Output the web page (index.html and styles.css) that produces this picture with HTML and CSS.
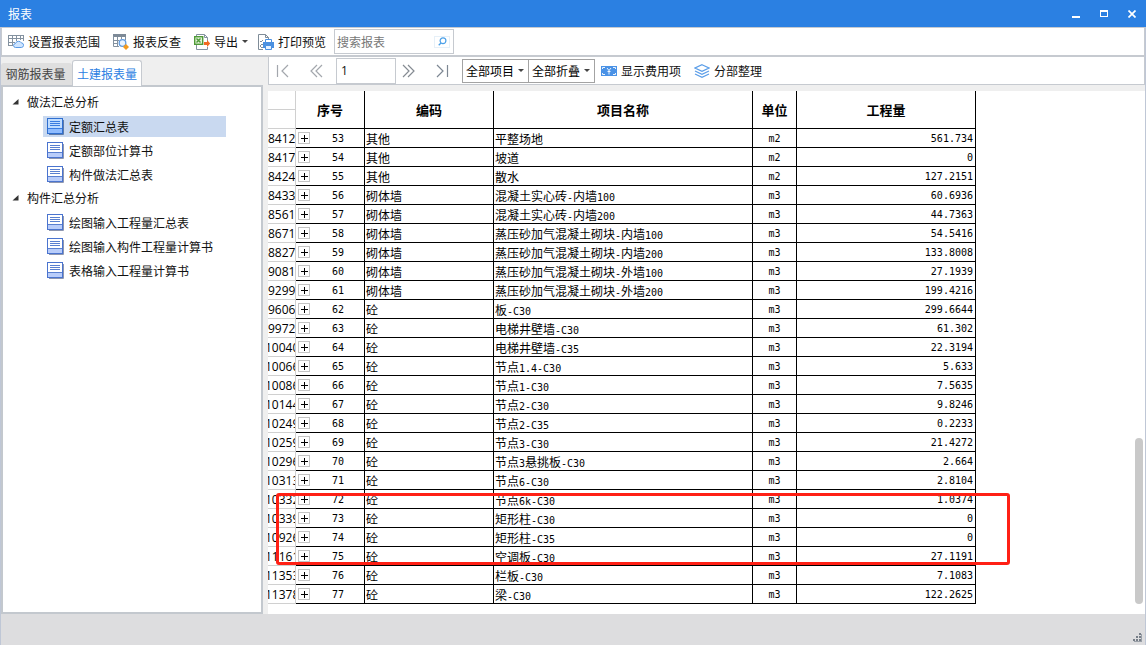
FILE: index.html
```
<!DOCTYPE html>
<html lang="zh-CN">
<head>
<meta charset="utf-8">
<title>报表</title>
<link rel="stylesheet" href="styles.css">
</head>
<body>
<svg class="defs" aria-hidden="true">
  <symbol id="sheet" viewBox="0 0 17 17">
    <path d="M2 16.5h14.5V2" fill="none" stroke="#8e97b0"/>
    <rect x=".5" y=".5" width="15" height="15" fill="#fff" stroke="#4a74cf"/>
    <path d="M1 11h14v4H1z" fill="#b9cdfa"/>
    <path d="M1 10.500h14M3 3.500h10M3 5.500h10M3 7.500h10" stroke="#5a80d0" fill="none"/>
  </symbol>
  <symbol id="sheet-on" viewBox="0 0 17 17">
    <path d="M2 16.5h14.5V2" fill="none" stroke="#5f7ba8"/>
    <rect x=".5" y=".5" width="15" height="15" fill="#bfdcff" stroke="#2f6fd0"/>
    <path d="M1 11h14v4H1z" fill="#8fbcff"/>
    <path d="M1 10.500h14M3 3.500h10M3 5.500h10M3 7.500h10" stroke="#3a7ce0" fill="none"/>
  </symbol>
</svg>
<div class="window">
  <header class="titlebar">
    <h1>报表</h1>
    <div class="win-buttons">
      <button type="button" aria-label="最小化"><svg width="8" height="8" viewBox="0 0 8 8"><path d="M0 6h8v2H0z" fill="#fff"/></svg></button>
      <button type="button" aria-label="最大化"><svg width="8" height="8" viewBox="0 0 8 8"><path d="M0 0h8v7H0zM1 2v4h6V2z" fill="#fff" fill-rule="evenodd"/></svg></button>
      <button type="button" aria-label="关闭"><svg width="8" height="8" viewBox="0 0 8 8"><path d="M.5.5l7 7M7.500.5l-7 7" stroke="#fff" stroke-width="1.700"/></svg></button>
    </div>
  </header>

  <div class="toolbar">
    <button class="tool" type="button">
      <svg width="16" height="16" viewBox="0 0 16 16"><path d="M.5 1v10.500M4.500 1v10.500M8.500 1v6M12.500 1v5M15.500 1v6M0 1.500h16M0 4.500h16M0 8.500h7M0 11.500h5" stroke="#8492a0" fill="none"/><path d="M7.500 13.500q-2-.2-2-2 .1-1.800 2-2 .6-2.300 3-2.200 2-.1 2.800 1.500 2.300.2 2.300 2.500-.2 2.100-2.300 2.200z" fill="#cfe5ff" stroke="#5b9be6"/></svg>
      设置报表范围</button>
    <button class="tool" type="button">
      <svg width="16" height="16" viewBox="0 0 16 16"><path d="M0 0h13v3H0z" fill="#7d8a97"/><path d="M.5 2v10.500H6M4.500 3v9M8.500 3v2M12.500 3v3M0 6.500h6M0 9.500h5" stroke="#8492a0" fill="none"/><circle cx="9.500" cy="9" r="3.300" fill="#eaf4ff" stroke="#5f9be0" stroke-width="1.300"/><path d="M13 10l3 3-3 3-3-3z" fill="#f39a1e"/></svg>
      报表反查</button>
    <button class="tool export" type="button">
      <svg width="16" height="16" viewBox="0 0 16 16"><path d="M2.500 2V.5h8l3 3V7M10.500.5v3h3M2.500 11v4.500h11V13" fill="#fff" stroke="#8492a0"/><rect x=".7" y="2.700" width="8" height="7.600" fill="#dff2d5" stroke="#4f9a38" stroke-width="1.400"/><path d="M2.500 4.500l4 4m0-4l-4 4" stroke="#4f9a38" stroke-width="1.400"/><path d="M10 8h3V6l3.200 3.500L13 13v-2h-3z" fill="#f26a22"/></svg>
      导出<i class="caret"></i></button>
    <button class="tool" type="button">
      <svg width="16" height="16" viewBox="0 0 16 16"><path d="M5 15.500H.5V.5h7l3 3V6M7.500.5v3h3" fill="none" stroke="#7f8c98"/><path d="M2 7h2v1H2zM4 6h1v1H4zM3 10h2v1H3zM2 11h1v2H2zM3 13h2v1H3z" fill="#7f8c98"/><path d="M7.500 9V5.500h6V9" fill="#fff" stroke="#4a90e0"/><path d="M5 8h11v6h-2v-2H7v2H5z" fill="#4a90e0"/><path d="M7.500 11.500h6v4h-6z" fill="#e3f0ff" stroke="#4a90e0"/></svg>
      打印预览</button>
    <div class="search">
      <input type="search" placeholder="搜索报表" aria-label="搜索报表">
      <button type="button" aria-label="搜索"><svg width="9" height="9" viewBox="0 0 9 9"><circle cx="5" cy="3.800" r="2.900" fill="none" stroke="#4ba0e8" stroke-width="1.200"/><path d="M3 6L.7 8.200" stroke="#4ba0e8" stroke-width="1.300"/></svg></button>
    </div>
  </div>

  <div class="main">
    <aside class="side">
      <div class="tabs" role="tablist">
        <button class="tab" type="button" role="tab" aria-selected="false">钢筋报表量</button>
        <button class="tab active" type="button" role="tab" aria-selected="true">土建报表量</button>
      </div>
      <nav class="tree">
        <p class="group"><svg width="7" height="6" viewBox="0 0 7 6"><path d="M6.500 0v5.500H.5z" fill="#333"/></svg>做法汇总分析</p>
        <a class="leaf selected" href="#"><svg width="17" height="17"><use href="#sheet-on"/></svg>定额汇总表</a>
        <a class="leaf" href="#"><svg width="17" height="17"><use href="#sheet"/></svg>定额部位计算书</a>
        <a class="leaf" href="#"><svg width="17" height="17"><use href="#sheet"/></svg>构件做法汇总表</a>
        <p class="group"><svg width="7" height="6" viewBox="0 0 7 6"><path d="M6.500 0v5.500H.5z" fill="#333"/></svg>构件汇总分析</p>
        <a class="leaf" href="#"><svg width="17" height="17"><use href="#sheet"/></svg>绘图输入工程量汇总表</a>
        <a class="leaf" href="#"><svg width="17" height="17"><use href="#sheet"/></svg>绘图输入构件工程量计算书</a>
        <a class="leaf" href="#"><svg width="17" height="17"><use href="#sheet"/></svg>表格输入工程量计算书</a>
      </nav>
    </aside>

    <section class="content">
      <div class="pager">
        <button class="page-btn" type="button" aria-label="首页"><svg width="14" height="14" viewBox="0 0 14 14"><path d="M1.500 1v12M12 1L6 7l6 6" fill="none" stroke="#a3a7ad" stroke-width="1.200"/></svg></button>
        <button class="page-btn" type="button" aria-label="上一页"><svg width="14" height="14" viewBox="0 0 14 14"><path d="M8 1L2 7l6 6M13 1L7 7l6 6" fill="none" stroke="#a3a7ad" stroke-width="1.200"/></svg></button>
        <input class="page-no" type="text" value="1" aria-label="页码">
        <button class="page-btn" type="button" aria-label="下一页"><svg width="14" height="14" viewBox="0 0 14 14"><path d="M1 1l6 6-6 6M6 1l6 6-6 6" fill="none" stroke="#858b92" stroke-width="1.200"/></svg></button>
        <button class="page-btn" type="button" aria-label="末页"><svg width="14" height="14" viewBox="0 0 14 14"><path d="M2 1l6 6-6 6M12.500 1v12" fill="none" stroke="#7d8793" stroke-width="1.200"/></svg></button>
        <label class="pick"><select aria-label="项目"><option>全部项目</option></select><i class="caret"></i></label>
        <label class="pick"><select aria-label="折叠"><option>全部折叠</option></select><i class="caret"></i></label>
        <button class="tool fee" type="button">
          <svg width="16" height="10" viewBox="0 0 16 10"><path d="M0 0h16v10H0z" fill="#4a92e6"/><path d="M1.500 3V1.500H4M12 1.500h2.500V3M14.500 7v1.500H12M4 8.500H1.500V7M6 2l2 2.500L10 2M8 4.500v4M6.500 5.500h3" fill="none" stroke="#fff" stroke-width=".9"/></svg>
          显示费用项</button>
        <button class="tool" type="button">
          <svg width="16" height="14" viewBox="0 0 16 14"><path d="M8 .7l7 3.300-7 3.300L1 4zM1 7l7 3.300L15 7M1 10l7 3.300 7-3.300" fill="none" stroke="#5a9de8" stroke-width="1.200"/></svg>
          分部整理</button>
      </div>

      <div class="report">
        <div class="page">
          <table>
            <colgroup><col class="c-line"><col class="c-no"><col class="c-code"><col class="c-name"><col class="c-unit"><col class="c-qty"></colgroup>
            <thead>
              <tr><td class="corner"><div></div></td><th>序号</th><th>编码</th><th>项目名称</th><th>单位</th><th>工程量</th></tr>
            </thead>
            <tbody>
              <tr><th>8412</th><td><button type="button" aria-label="展开"></button>53</td><td>其他</td><td>平整场地</td><td>m2</td><td>561.734</td></tr>
              <tr><th>8417</th><td><button type="button" aria-label="展开"></button>54</td><td>其他</td><td>坡道</td><td>m2</td><td>0</td></tr>
              <tr><th>8424</th><td><button type="button" aria-label="展开"></button>55</td><td>其他</td><td>散水</td><td>m2</td><td>127.2151</td></tr>
              <tr><th>8433</th><td><button type="button" aria-label="展开"></button>56</td><td>砌体墙</td><td>混凝土实心砖<b>-</b>内墙<b>100</b></td><td>m3</td><td>60.6936</td></tr>
              <tr><th>8561</th><td><button type="button" aria-label="展开"></button>57</td><td>砌体墙</td><td>混凝土实心砖<b>-</b>内墙<b>200</b></td><td>m3</td><td>44.7363</td></tr>
              <tr><th>8671</th><td><button type="button" aria-label="展开"></button>58</td><td>砌体墙</td><td>蒸压砂加气混凝土砌块<b>-</b>内墙<b>100</b></td><td>m3</td><td>54.5416</td></tr>
              <tr><th>8827</th><td><button type="button" aria-label="展开"></button>59</td><td>砌体墙</td><td>蒸压砂加气混凝土砌块<b>-</b>内墙<b>200</b></td><td>m3</td><td>133.8008</td></tr>
              <tr><th>9081</th><td><button type="button" aria-label="展开"></button>60</td><td>砌体墙</td><td>蒸压砂加气混凝土砌块<b>-</b>外墙<b>100</b></td><td>m3</td><td>27.1939</td></tr>
              <tr><th>9299</th><td><button type="button" aria-label="展开"></button>61</td><td>砌体墙</td><td>蒸压砂加气混凝土砌块<b>-</b>外墙<b>200</b></td><td>m3</td><td>199.4216</td></tr>
              <tr><th>9606</th><td><button type="button" aria-label="展开"></button>62</td><td>砼</td><td>板<b>-C30</b></td><td>m3</td><td>299.6644</td></tr>
              <tr><th>9972</th><td><button type="button" aria-label="展开"></button>63</td><td>砼</td><td>电梯井壁墙<b>-C30</b></td><td>m3</td><td>61.302</td></tr>
              <tr><th class="wide">10040</th><td><button type="button" aria-label="展开"></button>64</td><td>砼</td><td>电梯井壁墙<b>-C35</b></td><td>m3</td><td>22.3194</td></tr>
              <tr><th class="wide">10066</th><td><button type="button" aria-label="展开"></button>65</td><td>砼</td><td>节点<b>1.4-C30</b></td><td>m3</td><td>5.633</td></tr>
              <tr><th class="wide">10086</th><td><button type="button" aria-label="展开"></button>66</td><td>砼</td><td>节点<b>1-C30</b></td><td>m3</td><td>7.5635</td></tr>
              <tr><th class="wide">10144</th><td><button type="button" aria-label="展开"></button>67</td><td>砼</td><td>节点<b>2-C30</b></td><td>m3</td><td>9.8246</td></tr>
              <tr><th class="wide">10249</th><td><button type="button" aria-label="展开"></button>68</td><td>砼</td><td>节点<b>2-C35</b></td><td>m3</td><td>0.2233</td></tr>
              <tr><th class="wide">10259</th><td><button type="button" aria-label="展开"></button>69</td><td>砼</td><td>节点<b>3-C30</b></td><td>m3</td><td>21.4272</td></tr>
              <tr><th class="wide">10296</th><td><button type="button" aria-label="展开"></button>70</td><td>砼</td><td>节点<b>3</b>悬挑板<b>-C30</b></td><td>m3</td><td>2.664</td></tr>
              <tr><th class="wide">10313</th><td><button type="button" aria-label="展开"></button>71</td><td>砼</td><td>节点<b>6-C30</b></td><td>m3</td><td>2.8104</td></tr>
              <tr><th class="wide">10332</th><td><button type="button" aria-label="展开"></button>72</td><td>砼</td><td>节点<b>6k-C30</b></td><td>m3</td><td>1.0374</td></tr>
              <tr><th class="wide">10339</th><td><button type="button" aria-label="展开"></button>73</td><td>砼</td><td>矩形柱<b>-C30</b></td><td>m3</td><td>0</td></tr>
              <tr><th class="wide">10926</th><td><button type="button" aria-label="展开"></button>74</td><td>砼</td><td>矩形柱<b>-C35</b></td><td>m3</td><td>0</td></tr>
              <tr><th class="wide">11161</th><td><button type="button" aria-label="展开"></button>75</td><td>砼</td><td>空调板<b>-C30</b></td><td>m3</td><td>27.1191</td></tr>
              <tr><th class="wide">11353</th><td><button type="button" aria-label="展开"></button>76</td><td>砼</td><td>栏板<b>-C30</b></td><td>m3</td><td>7.1083</td></tr>
              <tr><th class="wide">11378</th><td><button type="button" aria-label="展开"></button>77</td><td>砼</td><td>梁<b>-C30</b></td><td>m3</td><td>122.2625</td></tr>
            </tbody>
          </table>
          <div class="mark"></div>
        </div>
        <div class="scroll"><div class="thumb"></div></div>
      </div>
    </section>
  </div>

  <footer class="status">
    <svg width="9" height="9" viewBox="0 0 9 9"><path d="M6 0h2v2H6zM3 3h2v2H3zM6 3h2v2H6zM0 6h2v2H0zM3 6h2v2H3zM6 6h2v2H6z" fill="#777e88"/><path d="M8 1h1v8H1V8h7z" fill="#9aa0a8"/></svg>
  </footer>
</div>
</body>
</html>
```
FILE: styles.css
```
* { box-sizing: border-box; }
body {
  margin: 0;
  font: 12px/18px "Noto Sans CJK SC", sans-serif;
  color: #111;
}
button, input, select {
  font: inherit;
  color: inherit;
  margin: 0;
  padding: 0;
  border: 0;
  background: none;
}
h1, p { margin: 0; font: inherit; }
svg { flex: none; display: block; }
.defs { position: absolute; width: 0; height: 0; }

.window {
  display: flex;
  flex-direction: column;
  min-height: 100vh;
  background: #efefef;
  border: 1px solid #bfc7d6;
  border-top: 0;
}
.titlebar {
  display: flex;
  align-items: center;
  justify-content: space-between;
  height: 27px;
  margin: 0 -1px;
  padding: 0 6px 0 8px;
  background: #2b80e2;
  color: #fff;
}
.win-buttons { display: flex; gap: 12px; }
.win-buttons button { padding: 4px; }

.toolbar {
  display: flex;
  align-items: center;
  height: 30px;
  padding: 0 3px;
  background: #fff;
  border: 1px solid #c6cad0;
  border-width: 1px 1px 2px;
}
.tool {
  display: flex;
  align-items: center;
  gap: 4px;
  height: 22px;
  padding: 0 7px 0 3px;
  margin-right: 3px;
  white-space: nowrap;
}
.export { padding-right: 4px; }
.caret {
  border: 3px solid transparent;
  border-top-color: #444;
  border-bottom: 0;
}
.search {
  display: flex;
  align-items: center;
  width: 120px;
  height: 25px;
  margin-left: -2px;
  padding: 0 3px 0 2px;
  border: 1px solid #c6cad0;
}
.search input { flex: 1; min-width: 0; outline: 0; appearance: none; }
.search input::placeholder { color: #777; opacity: 1; }
.search button {
  display: flex;
  justify-content: center;
  align-items: center;
  width: 16px;
  height: 12px;
  border: 1px solid #e6f0f8;
}

.main { display: flex; flex: 1; gap: 5px; }
.side { display: flex; flex-direction: column; width: 262px; padding-top: 3px; }
.tabs { display: flex; align-items: flex-end; }
.tab {
  width: 71px;
  height: 22px;
  padding-right: 2px;
  border-radius: 3px 3px 0 0;
  background: #dfdfdf;
  color: #444;
}
.tab.active {
  position: relative;
  width: 70px;
  height: 26px;
  margin-bottom: -1px;
  padding: 0;
  border: 1px solid #c6cad0;
  border-bottom: 0;
  background: #fff;
  color: #2b80e2;
}
.tree {
  display: flex;
  flex-direction: column;
  flex: 1;
  padding-top: 3px;
  background: #fff;
  border: 2px solid #c3c8ce;
}
.group, .leaf { display: flex; align-items: center; }
.group { gap: 8px; height: 24px; padding-left: 9px; }
.leaf {
  gap: 5px;
  height: 21px;
  margin: 2px 35px 1px 40px;
  padding-left: 4px;
  color: inherit;
  text-decoration: none;
  white-space: nowrap;
}
.selected { background: #c9d9f0; }

.content { display: flex; flex-direction: column; flex: 1; min-width: 0; }
.pager {
  display: flex;
  align-items: center;
  height: 28px;
  margin-bottom: 6px;
  padding-left: 1px;
  background: #fff;
  border: 1px solid #c6cad0;
  border-top: 0;
}
.page-btn {
  display: flex;
  align-items: center;
  justify-content: center;
  width: 26px;
  height: 22px;
  margin-right: 7px;
}
.page-no {
  width: 60px;
  height: 26px;
  padding-left: 4px;
  border: 1px solid #c6cad0;
  font-family: "Open Sans", sans-serif;
}
.pick {
  display: flex;
  align-items: center;
  height: 24px;
  padding: 0 4px 0 3px;
  gap: 3px;
  border: 1px solid #a3a3a3;
  background: #fff;
}
.pick + .pick { margin-left: -1px; }
.pick select { appearance: none; outline: 0; color: #000; }
.fee { margin-left: 3px; }

.report { display: flex; flex: 1; background: #fff; }
.page { position: relative; flex: 1; min-width: 0; padding-bottom: 10px; }
table { width: 708px; table-layout: fixed; border-spacing: 0; color: #000; }
.c-line { width: 28px; }
.c-no { width: 69px; }
.c-code { width: 129px; }
.c-name { width: 259px; }
.c-unit { width: 44px; }
.c-qty { width: 179px; }
td, th {
  height: 19px;
  padding: 2px 0 0;
  border: solid #000;
  border-width: 0 1px 1px 0;
  line-height: 16px;
  white-space: nowrap;
}
thead th { height: 38px; padding: 0; font-size: 13px; }
.corner { padding: 0; border-color: #d0d0d0; vertical-align: top; }
.corner div { height: 19px; border-bottom: 1px solid #d0d0d0; }
tbody th {
  border-color: #d0d0d0;
  font: 12px/16px "Open Sans", sans-serif;
  text-align: left;
  overflow: hidden;
}
.wide { text-indent: -3px; }
td:nth-child(3), td:nth-child(4) { padding-left: 1px; }
td:nth-child(2), td:nth-child(5), td:nth-child(6) {
  font: 10px/16px "DejaVu Sans Mono", monospace;
}
td b { font: 10px/10px "DejaVu Sans Mono", monospace; }
td:nth-child(2), td:nth-child(5) { text-align: center; }
td:nth-child(6) { padding-right: 2px; text-align: right; }
td button {
  float: left;
  width: 12px;
  height: 12px;
  margin: 1px 2px 0;
  border: 1px solid #c4c4c4;
  background:
    linear-gradient(#000, #000) 2px 5px / 7px 1px no-repeat,
    linear-gradient(#000, #000) 5px 2px / 1px 7px no-repeat,
    #fff;
}
.mark {
  position: absolute;
  left: 8px;
  top: 402px;
  width: 734px;
  height: 72px;
  border: 3px solid #ff2015;
  border-radius: 3px;
}
.scroll { display: flex; align-items: flex-end; padding: 0 2px 10px 0; }
.thumb { width: 8px; height: 166px; border-radius: 4px; background: #c9c9c9; }

.status {
  display: flex;
  align-items: flex-end;
  justify-content: flex-end;
  height: 31px;
  padding: 0 3px 3px 0;
  background: #dddddf;
}
```
